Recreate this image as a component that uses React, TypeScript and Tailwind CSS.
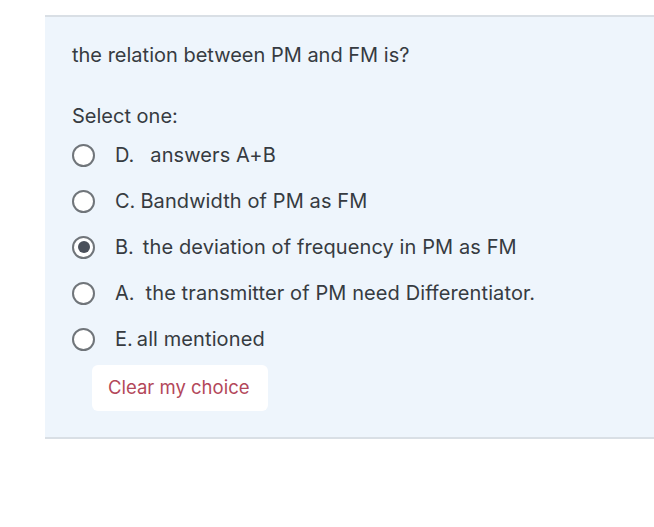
import React from "react";

const options = [
  { label: "D.", text: "answers A+B", gap: "ml-[16px]", checked: false },
  { label: "C.", text: "Bandwidth of PM as FM", gap: "ml-[5px]", checked: false },
  { label: "B.", text: "the deviation of frequency in PM as FM", gap: "ml-[9px]", checked: true },
  { label: "A.", text: "the transmitter of PM need Differentiator.", gap: "ml-[11px]", checked: false },
  { label: "E.", text: "all mentioned", gap: "ml-[4px]", checked: false },
];

function Radio({ checked }: { checked: boolean }) {
  return (
    <span className="flex h-[23px] w-[23px] items-center justify-center rounded-full border-2 border-[#70757a] bg-white">
      {checked && <span className="h-[12px] w-[12px] rounded-full bg-[#4a505a]" />}
    </span>
  );
}

export default function App() {
  return (
    <div className="h-[527px] w-[654px] bg-white pt-[15px] font-['Inter',sans-serif] text-[#363b41]">
      <div className="ml-[45px] h-[424px] border-y-2 border-[#d9dfe5] bg-[#eef5fc] pl-[27px] pt-[25px]">
        <p className="text-[20px] leading-[26px]">the relation between PM and FM is?</p>
        <p className="mt-[35px] text-[20px] leading-[26px]">Select one:</p>
        <div className="mt-[13px] flex flex-col gap-[20px]">
          {options.map((o) => (
            <div key={o.label} className="flex h-[26px] items-center">
              <Radio checked={o.checked} />
              <span className="ml-[20px] text-[20px] leading-[26px]">{o.label}</span>
              <span className={`${o.gap} text-[20px] tracking-[0.1px] leading-[26px]`}>{o.text}</span>
            </div>
          ))}
        </div>
        <button className="ml-[20px] mt-[13px] h-[46px] rounded-md bg-white pl-[16px] pr-[18px] text-[18.5px] text-[#b3475a]">
          Clear my choice
        </button>
      </div>
    </div>
  );
}
